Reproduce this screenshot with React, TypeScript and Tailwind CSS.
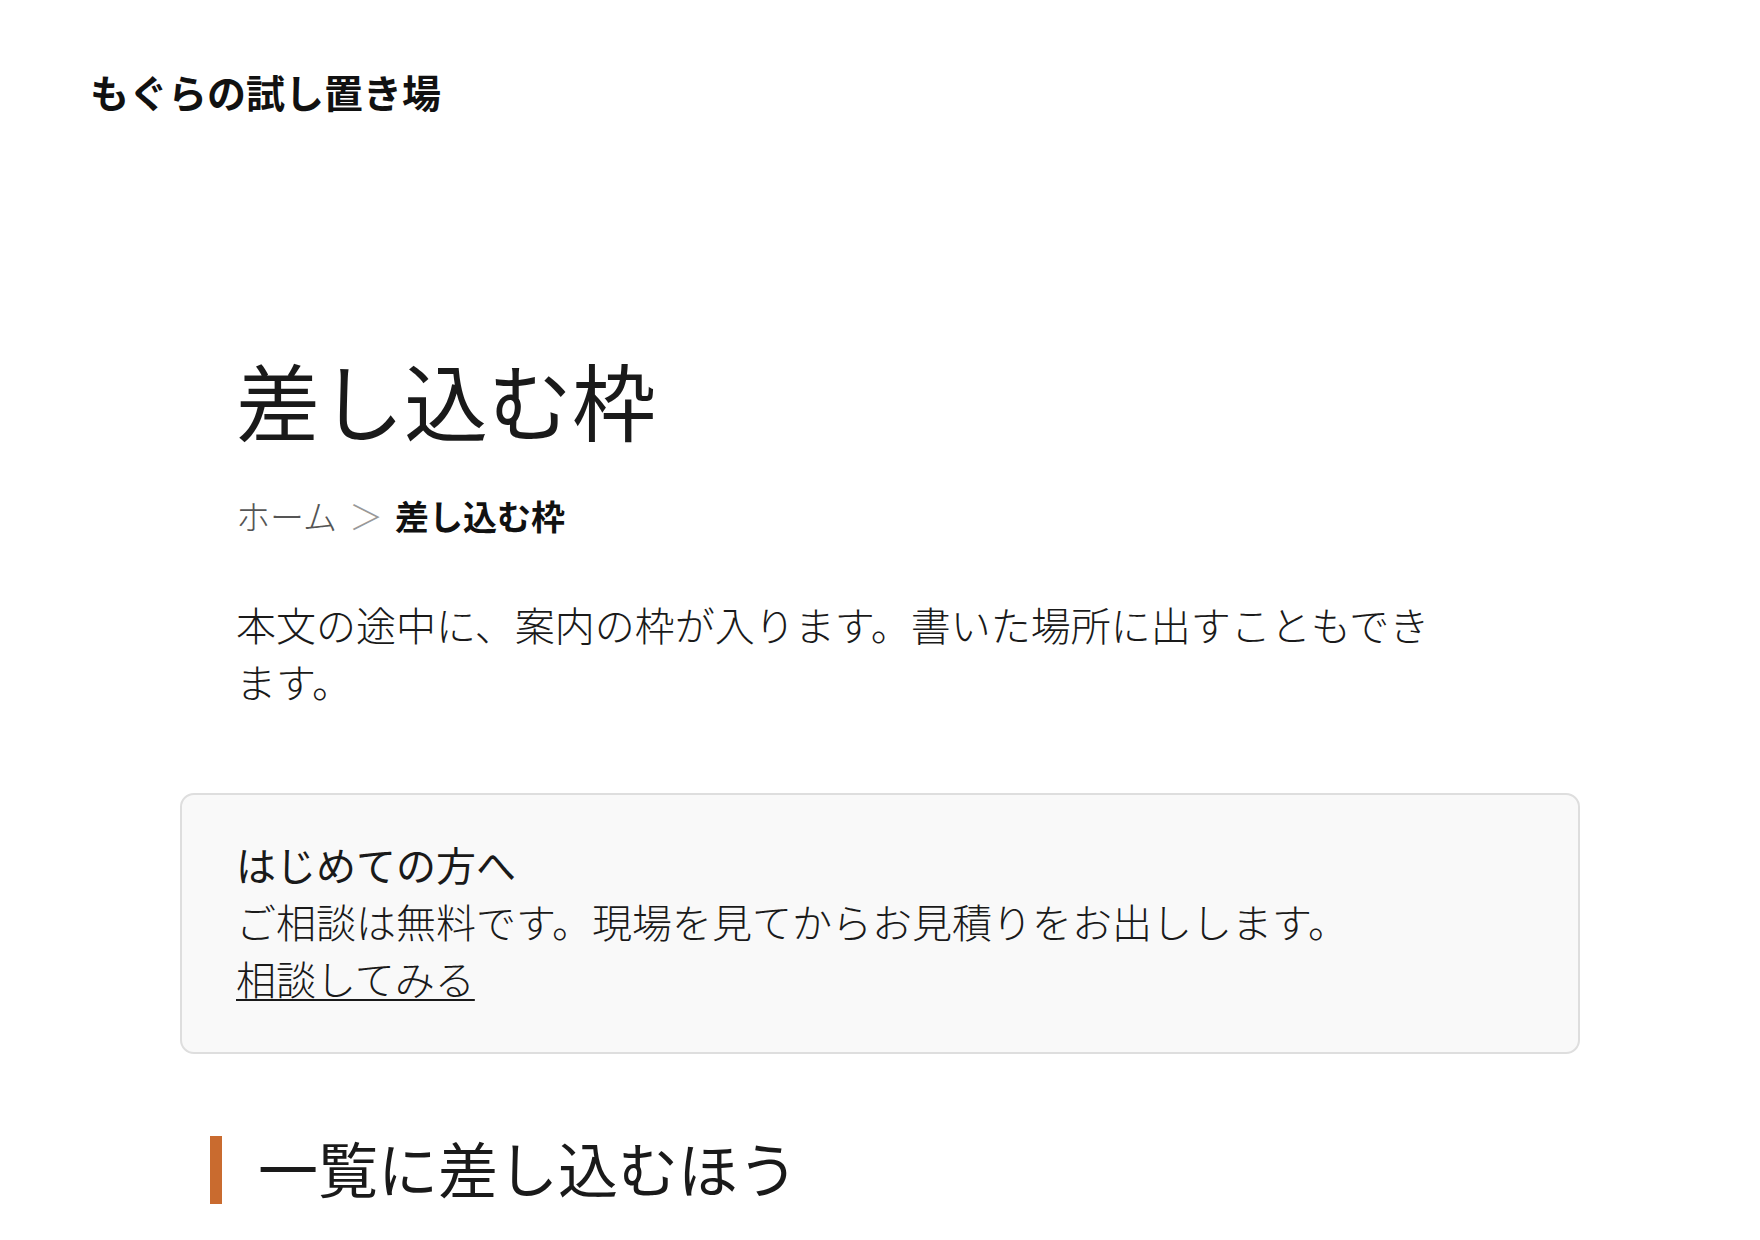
const JP = { fontFamily: '"Noto Sans CJK JP", "Noto Sans", sans-serif' }

function Breadcrumb() {
  return (
    <nav className="mt-[44px] flex items-center text-[34px] leading-[46px]">
      <a href="#" className="font-light text-[#555]">
        ホーム
      </a>
      <span className="px-[12px] font-light text-[#999]">＞</span>
      <span className="font-bold text-[#111]">差し込む枠</span>
    </nav>
  )
}

function NoticeBox() {
  return (
    <aside className="mt-[83px] rounded-[14px] border-2 border-[#dedede] bg-[#f9f9f9] pt-[41px] pb-[45px] pl-[54px] pr-[56px] text-[40px] leading-[57px]">
      <p className="font-normal text-[#1a1a1a]">はじめての方へ</p>
      <p className="font-light text-[#1a1a1a]">
        ご相談は無料です。現場を見てからお見積りをお出しします。
      </p>
      <a
        href="#"
        className="font-light text-[#1a1a1a] underline decoration-[2px] underline-offset-[4px]"
      >
        相談してみる
      </a>
    </aside>
  )
}

export default function App() {
  return (
    <div className="min-h-screen bg-white text-[#1a1a1a]" style={JP}>
      <header className="pl-[90px] pt-[66px]">
        <p className="text-[39px] font-bold leading-[50px] text-[#111]">もぐらの試し置き場</p>
      </header>

      <main className="mx-auto w-[1400px]">
        <div className="pl-[56px]">
          <h1 className="mt-[232px] text-[84px] font-normal leading-[101px] text-[#1a1a1a]">
            差し込む枠
          </h1>
          <Breadcrumb />
          <p className="mt-[57px] max-w-[30em] text-[40px] font-light leading-[57px]">
            本文の途中に、案内の枠が入ります。書いた場所に出すこともできます。
          </p>
        </div>

        <NoticeBox />

        <h2 className="ml-[30px] mt-[82px] border-l-[12px] border-[#c96b2f] pb-[6px] pl-[36px] text-[60px] font-normal leading-[62px] text-[#1a1a1a]">
          一覧に差し込むほう
        </h2>
      </main>
    </div>
  )
}
